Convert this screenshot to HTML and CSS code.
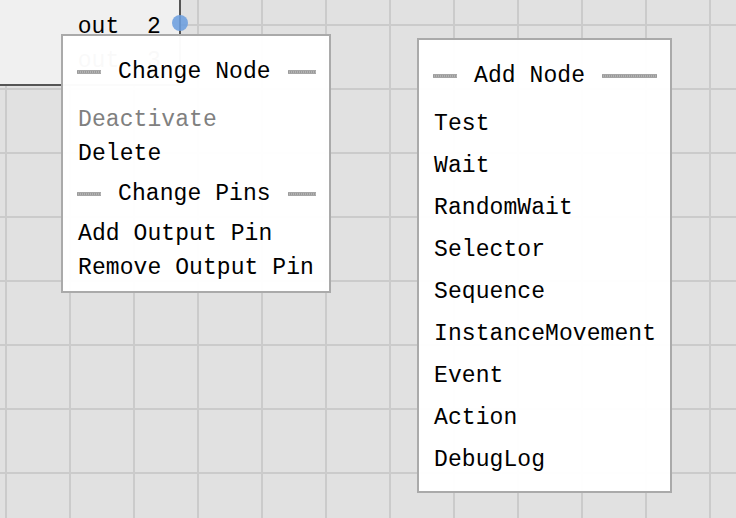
FILE: index.html
```html
<!DOCTYPE html>
<html lang="en">
<head>
    <meta charset="UTF-8">
    <meta name="viewport" content="width=device-width, initial-scale=1.0">
    <title>Behaviour Graph</title>
    <link rel="stylesheet" href="styles.css">
</head>
<body>
    <!-- Graph canvas -->
    <div class="canvas">
        <div class="node">
            <div class="node-row">out  2</div>
            <div class="node-row">out  3</div>
            <span class="pin"></span>
        </div>

        <!-- Node context menu -->
        <div class="menu menu-node">
            <div class="menu-title first">
                <span class="bar bar-left"></span>
                <span>Change Node</span>
                <span class="bar bar-right"></span>
            </div>
            <div class="menu-item disabled">Deactivate</div>
            <div class="menu-item">Delete</div>
            <div class="menu-title">
                <span class="bar bar-left"></span>
                <span>Change Pins</span>
                <span class="bar bar-right"></span>
            </div>
            <div class="menu-item">Add Output Pin</div>
            <div class="menu-item">Remove Output Pin</div>
        </div>

        <!-- Add node menu -->
        <div class="menu menu-add">
            <div class="menu-title">
                <span class="bar bar-left"></span>
                <span>Add Node</span>
                <span class="bar bar-right"></span>
            </div>
            <div class="menu-item">Test</div>
            <div class="menu-item">Wait</div>
            <div class="menu-item">RandomWait</div>
            <div class="menu-item">Selector</div>
            <div class="menu-item">Sequence</div>
            <div class="menu-item">InstanceMovement</div>
            <div class="menu-item">Event</div>
            <div class="menu-item">Action</div>
            <div class="menu-item">DebugLog</div>
        </div>
    </div>
</body>
</html>
```

FILE: styles.css
```css
body {
    margin: 0;
    font-family: "Liberation Mono", "DejaVu Sans Mono", monospace;
    font-size: 23px;
    letter-spacing: 0.08px;
    color: #000;
    overflow: hidden;
}

/* Grid background */
.canvas {
    position: relative;
    width: 736px;
    height: 518px;
    background-color: #e1e1e1;
    background-image:
        linear-gradient(to right, #cbcbcb 2px, transparent 2px),
        linear-gradient(to bottom, #cbcbcb 2px, transparent 2px);
    background-size: 64px 64px;
    background-position: 5px 24px;
}

/* Node box, mostly off screen */
.node {
    position: absolute;
    left: -20px;
    top: -20px;
    width: 201px;
    height: 106px;
    box-sizing: border-box;
    padding: 28px 18px 0 0;
    background-color: #f0f0f0;
    border: 2px solid #555;
}
.node-row {
    height: 34px;
    line-height: 34px;
    text-align: right;
    white-space: pre;
}
.pin {
    position: absolute;
    right: -9px;
    top: 33px;
    width: 16px;
    height: 16px;
    border-radius: 50%;
    background-color: rgba(108, 158, 222, 0.88);
}

/* Context menus */
.menu {
    position: absolute;
    box-sizing: border-box;
    border: 2px solid #aaa;
    background-color: rgba(255, 255, 255, 0.975);
    padding: 19px 13px 0 14px;
}
.menu-node {
    left: 61px;
    top: 34px;
    width: 270px;
    height: 259px;
}
.menu-add {
    left: 417px;
    top: 38px;
    width: 255px;
    height: 455px;
}

.menu-title {
    display: flex;
    align-items: center;
    gap: 17px;
    height: 34px;
    line-height: 34px;
    margin: 6px 0;
}
.menu-title.first {
    margin: 0 0 14px;
}
.menu-add .menu-title {
    margin: 0 0 10px;
}

.bar {
    height: 4px;
    background: repeating-linear-gradient(to right, #9a9a9a 0 1px, #b3b3b3 1px 2px);
    border-top: 1px solid #a6a6a6;
    border-bottom: 1px solid #a6a6a6;
    box-sizing: border-box;
}
.bar-left {
    width: 24px;
}
.bar-right {
    flex: 1;
}

.menu-item {
    height: 34px;
    line-height: 34px;
    padding-left: 1px;
    white-space: pre;
}
.menu-add .menu-item {
    height: 42px;
    line-height: 42px;
}
.menu-item.disabled {
    color: #808080;
}
```
